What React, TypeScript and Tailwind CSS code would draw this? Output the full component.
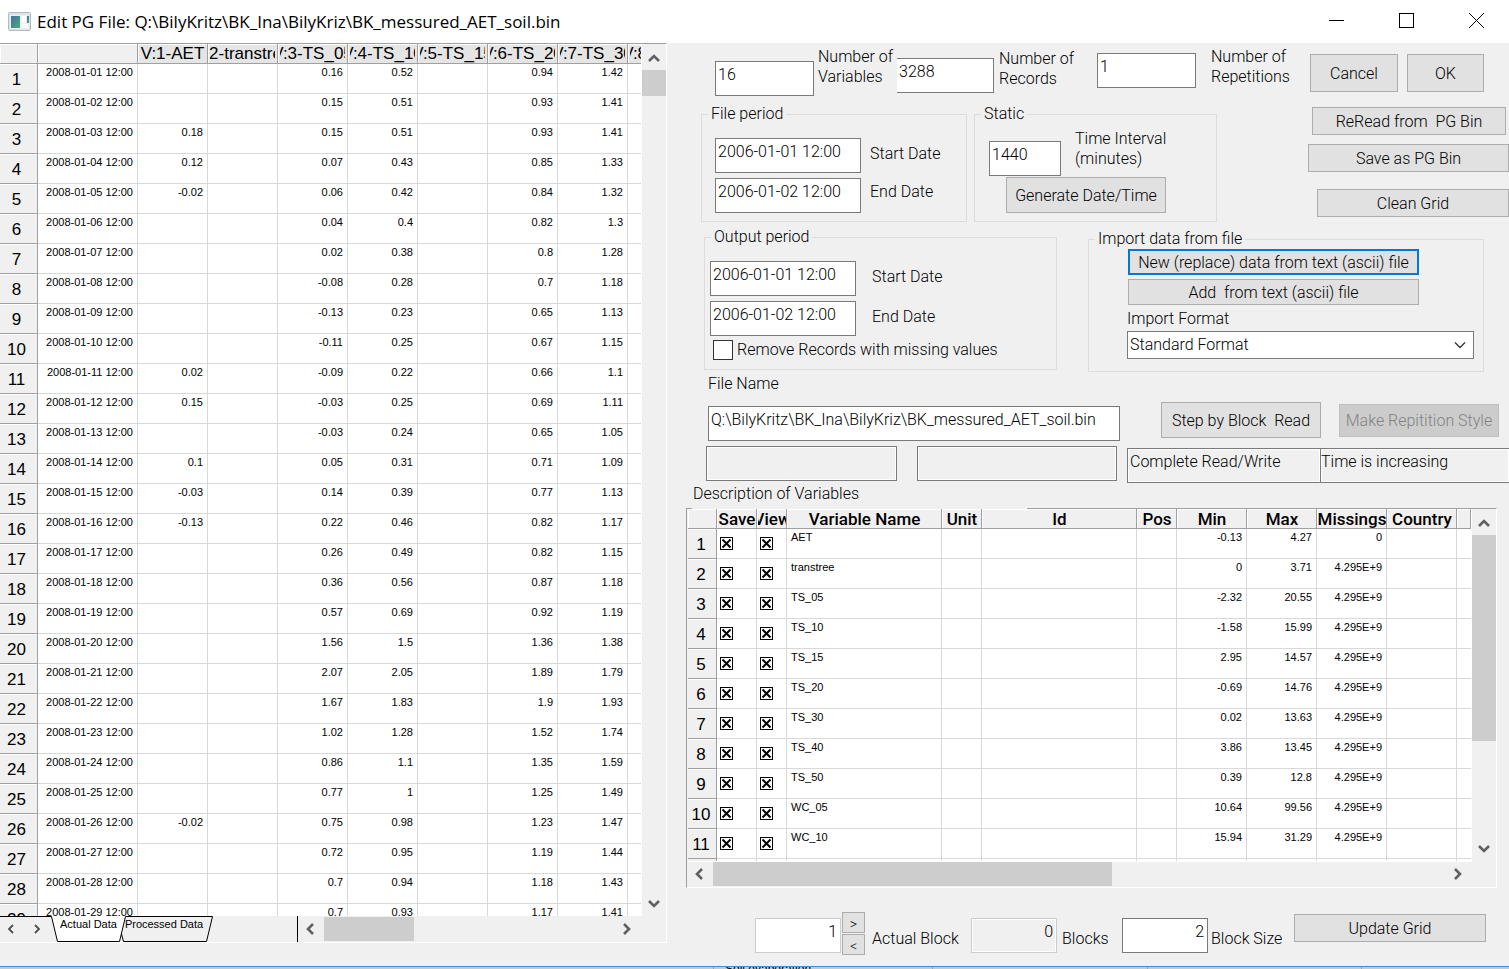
import React from "react";

type Cell = string;

const readings: Cell[][] = [
  ["", "", "0.16", "0.52", "", "0.94", "1.42"],
  ["", "", "0.15", "0.51", "", "0.93", "1.41"],
  ["0.18", "", "0.15", "0.51", "", "0.93", "1.41"],
  ["0.12", "", "0.07", "0.43", "", "0.85", "1.33"],
  ["-0.02", "", "0.06", "0.42", "", "0.84", "1.32"],
  ["", "", "0.04", "0.4", "", "0.82", "1.3"],
  ["", "", "0.02", "0.38", "", "0.8", "1.28"],
  ["", "", "-0.08", "0.28", "", "0.7", "1.18"],
  ["", "", "-0.13", "0.23", "", "0.65", "1.13"],
  ["", "", "-0.11", "0.25", "", "0.67", "1.15"],
  ["0.02", "", "-0.09", "0.22", "", "0.66", "1.1"],
  ["0.15", "", "-0.03", "0.25", "", "0.69", "1.11"],
  ["", "", "-0.03", "0.24", "", "0.65", "1.05"],
  ["0.1", "", "0.05", "0.31", "", "0.71", "1.09"],
  ["-0.03", "", "0.14", "0.39", "", "0.77", "1.13"],
  ["-0.13", "", "0.22", "0.46", "", "0.82", "1.17"],
  ["", "", "0.26", "0.49", "", "0.82", "1.15"],
  ["", "", "0.36", "0.56", "", "0.87", "1.18"],
  ["", "", "0.57", "0.69", "", "0.92", "1.19"],
  ["", "", "1.56", "1.5", "", "1.36", "1.38"],
  ["", "", "2.07", "2.05", "", "1.89", "1.79"],
  ["", "", "1.67", "1.83", "", "1.9", "1.93"],
  ["", "", "1.02", "1.28", "", "1.52", "1.74"],
  ["", "", "0.86", "1.1", "", "1.35", "1.59"],
  ["", "", "0.77", "1", "", "1.25", "1.49"],
  ["-0.02", "", "0.75", "0.98", "", "1.23", "1.47"],
  ["", "", "0.72", "0.95", "", "1.19", "1.44"],
  ["", "", "0.7", "0.94", "", "1.18", "1.43"],
  ["", "", "0.7", "0.93", "", "1.17", "1.41"],
];

const seriesHeads = [
  "V:1-AET",
  "V:2-transtree",
  "V:3-TS_05",
  "V:4-TS_10",
  "V:5-TS_15",
  "V:6-TS_20",
  "V:7-TS_30",
  "V:8-TS_40",
];

const variables = [
  { name: "AET", min: "-0.13", max: "4.27", missing: "0" },
  { name: "transtree", min: "0", max: "3.71", missing: "4.295E+9" },
  { name: "TS_05", min: "-2.32", max: "20.55", missing: "4.295E+9" },
  { name: "TS_10", min: "-1.58", max: "15.99", missing: "4.295E+9" },
  { name: "TS_15", min: "2.95", max: "14.57", missing: "4.295E+9" },
  { name: "TS_20", min: "-0.69", max: "14.76", missing: "4.295E+9" },
  { name: "TS_30", min: "0.02", max: "13.63", missing: "4.295E+9" },
  { name: "TS_40", min: "3.86", max: "13.45", missing: "4.295E+9" },
  { name: "TS_50", min: "0.39", max: "12.8", missing: "4.295E+9" },
  { name: "WC_05", min: "10.64", max: "99.56", missing: "4.295E+9" },
  { name: "WC_10", min: "15.94", max: "31.29", missing: "4.295E+9" },
];

const variableHeads = ["Save", "View", "Variable Name", "Unit", "Id", "Pos", "Min", "Max", "Missings", "Country", ""];

const btn = "border border-[#adadad] bg-[#e1e1e1] pt-[2px] text-center whitespace-pre";
const box = "h-[35px] rounded-none border border-[#7a7a7a] bg-white pt-[2px] pb-[11px] pl-[2px] leading-5 outline-none";
const group = "border border-[#dcdcdc]";
const legend = "ml-[6px] px-[3px] leading-5";
const headCell = "h-5 border-r border-b border-[#a0a0a0] p-0 font-normal shadow-[inset_1px_1px_0_#fff]";
const bodyCell = "h-[30px] border-r border-b border-[#d9d9d9] px-1 py-0 align-top";

const arrows = {
  up: "M1 9 L6 4 L11 9",
  down: "M1 3 L6 8 L11 3",
  left: "M9 1 L4 6 L9 11",
  right: "M3 1 L8 6 L3 11",
};

function Arrow({ dir, label }: { dir: keyof typeof arrows; label: string }) {
  return (
    <button type="button" aria-label={label} className="flex size-6 shrink-0 items-center justify-center">
      <svg width="12" height="12" viewBox="0 0 12 12" fill="none" stroke="#606060" strokeWidth="2.6">
        <path d={arrows[dir]} />
      </svg>
    </button>
  );
}

function HeadText({ children }: { children: string }) {
  return (
    <div className="mx-[2px] flex h-[19px] justify-center overflow-hidden leading-5 whitespace-nowrap">
      <span>{children}</span>
    </div>
  );
}

function Mark({ label }: { label: string }) {
  return (
    <span className="relative mt-2 block size-[13px]">
      <input
        type="checkbox"
        defaultChecked
        aria-label={label}
        className="peer block size-[13px] appearance-none border border-black bg-white"
      />
      <svg
        className="pointer-events-none absolute inset-0 hidden peer-checked:block"
        width="13"
        height="13"
        viewBox="0 0 13 13"
        stroke="#000"
        strokeWidth="2"
      >
        <path d="M2.500 2.500 L10.500 10.500 M10.500 2.500 L2.500 10.500" />
      </svg>
    </span>
  );
}

function TitleBar() {
  return (
    <header className="flex h-[43px] shrink-0 items-center bg-white pl-2">
      <svg width="23" height="20" viewBox="0 0 23 20">
        <defs>
          <linearGradient id="pane" x1="0" y1="0" x2="1" y2="1">
            <stop offset="0" stopColor="#3f74a8" />
            <stop offset="1" stopColor="#4fa876" />
          </linearGradient>
        </defs>
        <rect x="0.5" y="0.5" width="22" height="18" rx="1" fill="#dfe3e8" stroke="#b4b9c2" />
        <rect x="2" y="3" width="19" height="14" fill="#eceff2" />
        <rect x="3" y="4" width="9" height="12" fill="url(#pane)" />
        <rect x="14" y="4" width="4" height="7" fill="#fff" />
        <rect x="14" y="12" width="6" height="4" fill="#fafafa" />
        <rect x="19" y="4" width="2" height="7" fill="url(#pane)" />
      </svg>
      <h1 className="ml-[6px] font-['Open_Sans','Noto_Sans',sans-serif] text-[17px] font-normal whitespace-nowrap">
        Edit PG File: Q:\BilyKritz\BK_Ina\BilyKriz\BK_messured_AET_soil.bin
      </h1>
      <div className="ml-auto flex h-full items-center pb-[2px] -mr-[2px]">
        <button type="button" aria-label="Minimize" className="flex h-full w-[70px] items-center justify-center">
          <svg width="15" height="15" viewBox="0 0 15 15" stroke="#000" fill="none">
            <path d="M0 7.5 H15" />
          </svg>
        </button>
        <button type="button" aria-label="Maximize" className="flex h-full w-[70px] items-center justify-center">
          <svg width="15" height="15" viewBox="0 0 15 15" stroke="#000" fill="none">
            <rect x="0.5" y="0.5" width="14" height="14" />
          </svg>
        </button>
        <button type="button" aria-label="Close" className="flex h-full w-[70px] items-center justify-center">
          <svg width="15" height="15" viewBox="0 0 15 15" stroke="#000" fill="none">
            <path d="M0 0 L15 15 M15 0 L0 15" />
          </svg>
        </button>
      </div>
    </header>
  );
}

function DataGrid() {
  return (
    <section aria-label="Data" className="mb-[23px] flex w-[667px] shrink-0 flex-col border-r border-b border-white border-t border-t-[#a0a0a0]">
      <div className="flex min-h-0 flex-1">
        <div className="min-w-0 flex-1 overflow-hidden border-r border-white bg-white">
          <table className="w-[698px] table-fixed border-separate border-spacing-0 font-['Liberation_Sans',Arial,sans-serif]">
            <colgroup>
              <col className="w-[38px]" />
              <col className="w-[100px]" />
              {seriesHeads.map((h) => (
                <col key={h} className="w-[70px]" />
              ))}
            </colgroup>
            <thead className="text-[17px]">
              <tr>
                <th className={`${headCell} bg-[#f0f0f0]`} />
                <th className={`${headCell} bg-[#f0f0f0]`} />
                {seriesHeads.map((h) => (
                  <th key={h} className={`${headCell} bg-[#e5e5e5]`}>
                    <HeadText>{h}</HeadText>
                  </th>
                ))}
              </tr>
            </thead>
            <tbody className="text-[11px] leading-4">
              {readings.map((row, i) => (
                <tr key={i}>
                  <th className="h-[30px] border-r border-b border-[#a0a0a0] bg-[#f0f0f0] p-0 pt-[2px] pr-1 text-[17px] font-normal shadow-[inset_0_1px_0_#fff]">
                    {i + 1}
                  </th>
                  <td className={`${bodyCell} text-right whitespace-nowrap`}>
                    2008-01-{String(i + 1).padStart(2, "0")} 12:00
                  </td>
                  {row.map((v, j) => (
                    <td key={j} className={`${bodyCell} text-right`}>
                      {v}
                    </td>
                  ))}
                  <td className={bodyCell} />
                </tr>
              ))}
            </tbody>
          </table>
        </div>
        <div className="flex w-6 flex-col pt-[2px]">
          <Arrow dir="up" label="Scroll up" />
          <div className="flex-1">
            <div className="h-[26px] bg-[#cdcdcd]" />
          </div>
          <Arrow dir="down" label="Scroll down" />
        </div>
      </div>
      <div className="flex h-[26px] items-center">
        <div className="relative flex h-full w-[298px] border-r border-black font-['Liberation_Sans',Arial,sans-serif] text-[11px] font-normal">
          <svg className="pointer-events-none absolute top-0 left-0" width="214" height="26" viewBox="0 0 214 26" stroke="#000" fill="none">
            <path d="M51.500 0 L57.500 25.500 H119.500 L125.500 0 Z" fill="#fff" stroke="none" />
            <path d="M0 0.500 H51.500 L57.500 25.500 H119.500 L125.500 0.500 H212.500 L206.500 25.500 H123.500 L121.500 18" />
          </svg>
          <div className="relative flex items-center">
            <button type="button" aria-label="Previous sheet" className="flex w-[22px] justify-center">
              <svg width="8" height="10" viewBox="0 0 8 10" fill="none" stroke="#505050" strokeWidth="1.800">
                <path d="M6 1 L2 5 L6 9" />
              </svg>
            </button>
            <button type="button" aria-label="Next sheet" className="ml-1 flex w-[22px] justify-center">
              <svg width="8" height="10" viewBox="0 0 8 10" fill="none" stroke="#505050" strokeWidth="1.800">
                <path d="M2 1 L6 5 L2 9" />
              </svg>
            </button>
          </div>
          <button type="button" className="relative ml-3 h-4 leading-4 whitespace-nowrap">Actual Data</button>
          <button type="button" className="relative ml-2 h-4 leading-4 whitespace-nowrap">Processed Data</button>
        </div>
        <Arrow dir="left" label="Scroll left" />
        <div className="flex-1 pl-[2px]">
          <div className="h-6 w-[90px] bg-[#cdcdcd]" />
        </div>
        <div className="mr-[27px]">
          <Arrow dir="right" label="Scroll right" />
        </div>
      </div>
    </section>
  );
}

function Counters() {
  return (
    <div className="flex h-[61px] items-start">
      <input id="nvar" defaultValue="16" className={`${box} mt-[18px] ml-12 w-[99px]`} />
      <label htmlFor="nvar" className="mt-1 ml-1 w-[79px] leading-5">
        Number of Variables
      </label>
      <input id="nrec" defaultValue="3288" className={`${box} mt-[15px] w-[97px] border-l-0`} />
      <label htmlFor="nrec" className="mt-[6px] ml-[5px] w-[79px] leading-5">
        Number of Records
      </label>
      <input id="nrep" defaultValue="1" className={`${box} mt-[10px] ml-[19px] w-[99px]`} />
      <label htmlFor="nrep" className="mt-1 ml-[15px] w-[84px] leading-5">
        Number of Repetitions
      </label>
    </div>
  );
}

function Periods() {
  return (
    <div className="flex items-start pl-[34px]">
      <fieldset className={`${group} h-[118px] w-[266px]`}>
        <legend className={legend}>File period</legend>
        <div className="flex items-center gap-[9px] pt-[14px] pl-[13px]">
          <input id="fstart" defaultValue="2006-01-01 12:00" className={`${box} w-[146px]`} />
          <label htmlFor="fstart" className="pb-1 leading-5">Start Date</label>
        </div>
        <div className="flex items-center gap-[9px] pt-[5px] pl-[13px]">
          <input id="fend" defaultValue="2006-01-02 12:00" className={`${box} w-[146px]`} />
          <label htmlFor="fend" className="pb-2 leading-5">End Date</label>
        </div>
      </fieldset>
      <fieldset className={`${group} ml-[7px] h-[118px] w-[243px]`}>
        <legend className={legend}>Static</legend>
        <div className="flex items-start gap-[14px] pt-[5px] pl-[14px]">
          <input id="interval" defaultValue="1440" className={`${box} mt-3 w-[72px]`} />
          <label htmlFor="interval" className="w-[110px] leading-5">
            Time Interval (minutes)
          </label>
        </div>
        <button type="button" className={`${btn} mt-px ml-[31px] h-9 w-[160px]`}>Generate Date/Time</button>
      </fieldset>
    </div>
  );
}

function OutputAndImport() {
  return (
    <div className="flex items-start pl-[37px]">
      <fieldset className={`${group} mt-[5px] h-[143px] w-[353px]`}>
        <legend className={legend}>Output period</legend>
        <div className="flex items-center gap-4 pt-[14px] pl-[5px]">
          <input id="ostart" defaultValue="2006-01-01 12:00" className={`${box} w-[146px]`} />
          <label htmlFor="ostart" className="pb-1 leading-5">Start Date</label>
        </div>
        <div className="flex items-center gap-4 pt-[5px] pl-[5px]">
          <input id="oend" defaultValue="2006-01-02 12:00" className={`${box} w-[146px]`} />
          <label htmlFor="oend" className="pb-1 leading-5">End Date</label>
        </div>
        <div className="flex items-center gap-1 pt-1 pl-2">
          <input id="missing" type="checkbox" className="size-5 appearance-none border border-[#333333] bg-white" />
          <label htmlFor="missing" className="leading-5">Remove Records with missing values</label>
        </div>
      </fieldset>
      <fieldset className={`${group} mt-[7px] ml-[31px] h-[143px] w-[396px]`}>
        <legend className={legend}>Import data from file</legend>
        <div className="flex w-[385px] flex-col items-start pl-[38px]">
          <button type="button" className="ml-px h-[26px] w-[291px] border-2 border-[#0078d7] bg-[#e1e1e1] pt-px leading-5">
            New (replace) data from text (ascii) file
          </button>
          <button type="button" className={`${btn} mt-1 ml-px h-[26px] w-[291px] leading-5`}>{"Add  from text (ascii) file"}</button>
          <label htmlFor="format" className="mt-1 leading-5">Import Format</label>
          <div className="relative mt-[2px] w-full">
            <select id="format" className="h-7 w-full appearance-none rounded-none border border-[#7a7a7a] bg-white pl-[2px] leading-5">
              <option>Standard Format</option>
            </select>
            <svg className="pointer-events-none absolute top-2 right-2" width="12" height="12" viewBox="0 0 12 12" fill="none" stroke="#333" strokeWidth="1.300">
              <path d="M1 3.500 L6 8.500 L11 3.500" />
            </svg>
          </div>
        </div>
      </fieldset>
    </div>
  );
}

function FileArea() {
  const flat = "h-[35px] rounded-none border-y border-[#7a7a7a] bg-[#f0f0f0] pt-[2px] pb-[11px] leading-5 shadow-[inset_0_0_0_1px_#fff] outline-none";
  return (
    <div className="flex flex-col">
      <label htmlFor="fname" className="mt-[2px] ml-[41px] leading-5">File Name</label>
      <div className="mt-2 flex items-start pl-[41px]">
        <input
          id="fname"
          defaultValue="Q:\BilyKritz\BK_Ina\BilyKriz\BK_messured_AET_soil.bin"
          className={`${box} mt-1 w-[412px]`}
        />
        <button type="button" className={`${btn} ml-[41px] h-9 w-[160px]`}>{"Step by Block  Read"}</button>
        <button type="button" disabled className="mt-[2px] ml-[18px] h-[33px] w-[160px] border border-[#bfbfbf] bg-[#cccccc] text-[#838383]">
          Make Repitition Style
        </button>
      </div>
      <div className="mt-[5px] flex items-start pl-[39px]">
        <input aria-label="First date" readOnly className={`${flat} w-[191px] border-x pl-[2px]`} />
        <input aria-label="Last date" readOnly className={`${flat} ml-5 w-[200px] border-x pl-[2px]`} />
        <input aria-label="Read mode" readOnly value="Complete Read/Write" className={`${flat} mt-[2px] ml-[10px] w-[194px] border-x pl-[2px]`} />
        <input aria-label="Time order" readOnly value="Time is increasing" className={`${flat} mt-[2px] min-w-0 flex-1 pl-0`} />
      </div>
    </div>
  );
}

function VariablesGrid() {
  return (
    <section aria-labelledby="vars" className="mr-3 ml-[19px] flex min-h-0 flex-1 flex-col">
      <h2 id="vars" className="relative z-10 -mb-px ml-[6px] h-[26px] w-[335px] bg-[#f0f0f0] pt-px pl-px leading-5">Description of Variables</h2>
      <div className="flex min-h-0 flex-1 flex-col border-r border-b border-white border-t border-l border-t-[#a0a0a0] border-l-[#a0a0a0]">
        <div className="flex min-h-0 flex-1 pl-px">
          <div className="min-w-0 flex-1 overflow-hidden border-r border-b border-white bg-white">
            <table className="w-full min-w-[782px] table-fixed border-separate border-spacing-0 font-['Liberation_Sans',Arial,sans-serif]">
              <colgroup>
                <col className="w-[29px]" />
                <col className="w-[40px]" />
                <col className="w-[30px]" />
                <col className="w-[155px]" />
                <col className="w-[40px]" />
                <col className="w-[155px]" />
                <col className="w-[40px]" />
                <col className="w-[70px]" />
                <col className="w-[70px]" />
                <col className="w-[70px]" />
                <col className="w-[70px]" />
                <col />
              </colgroup>
              <thead className="font-['Roboto',sans-serif] text-[17px]">
                <tr>
                  <th className={`${headCell} bg-[#f0f0f0]`} />
                  {variableHeads.map((h, i) => (
                    <th key={i} className={`${headCell} bg-[#f0f0f0]`}>
                      <div className="ml-px flex h-[19px] justify-center overflow-hidden leading-5 font-medium whitespace-nowrap">
                        <span>{h}</span>
                      </div>
                    </th>
                  ))}
                </tr>
              </thead>
              <tbody className="text-[11px] leading-4">
                {variables.map((v, i) => (
                  <tr key={v.name}>
                    <th className="h-[30px] border-r border-b border-[#a0a0a0] bg-[#f0f0f0] p-0 pt-[2px] pr-[2px] text-[17px] font-normal shadow-[inset_0_1px_0_#fff]">
                      {i + 1}
                    </th>
                    <td className={`${bodyCell} pl-[3px]`}><Mark label={`Save ${v.name}`} /></td>
                    <td className={`${bodyCell} pl-[3px]`}><Mark label={`View ${v.name}`} /></td>
                    <td className={bodyCell}>{v.name}</td>
                    <td className={bodyCell} />
                    <td className={bodyCell} />
                    <td className={bodyCell} />
                    <td className={`${bodyCell} text-right`}>{v.min}</td>
                    <td className={`${bodyCell} text-right`}>{v.max}</td>
                    <td className={`${bodyCell} text-right`}>{v.missing}</td>
                    <td className={bodyCell} />
                    <td className="border-b border-[#d9d9d9]" />
                  </tr>
                ))}
                <tr>
                  <th className="h-[30px] border-r border-[#a0a0a0] bg-[#f0f0f0]" />
                  {variableHeads.slice(1).map((h) => (
                    <td key={h} className={bodyCell} />
                  ))}
                  <td />
                </tr>
              </tbody>
            </table>
          </div>
          <div className="flex w-6 flex-col pt-[2px] pb-px">
            <Arrow dir="up" label="Scroll up" />
            <div className="flex-1">
              <div className="h-[206px] bg-[#cdcdcd]" />
            </div>
            <Arrow dir="down" label="Scroll down" />
          </div>
        </div>
        <div className="flex h-[25px] items-start">
          <Arrow dir="left" label="Scroll left" />
          <div className="flex-1 pl-[2px]">
            <div className="h-6 w-[399px] bg-[#cdcdcd]" />
          </div>
          <div className="mr-[26px]">
            <Arrow dir="right" label="Scroll right" />
          </div>
        </div>
      </div>
    </section>
  );
}

function BlockBar() {
  const num = "h-[35px] w-[86px] rounded-none border pt-[2px] pr-[3px] pb-[11px] text-right leading-5 outline-none";
  return (
    <footer className="mt-6 mb-[11px] flex items-start pl-[88px]">
      <input id="actual" defaultValue="1" className={`${num} mt-[6px] border-[#cccccc] bg-white`} />
      <div className="ml-px flex flex-col gap-px">
        <button type="button" className={`${btn} h-[21px] w-[23px] text-[14px] leading-4`}>&gt;</button>
        <button type="button" className={`${btn} h-[21px] w-[23px] text-[14px] leading-4`}>&lt;</button>
      </div>
      <label htmlFor="actual" className="mt-[17px] ml-[7px] w-[99px] leading-5">Actual Block</label>
      <input id="blocks" readOnly value="0" className={`${num} mt-[6px] border-[#cccccc] bg-[#f0f0f0] shadow-[inset_0_0_0_1px_#fff]`} />
      <label htmlFor="blocks" className="mt-[17px] ml-[5px] w-[60px] leading-5">Blocks</label>
      <input id="size" defaultValue="2" className={`${num} mt-[6px] border-[#7a7a7a] bg-white`} />
      <label htmlFor="size" className="mt-[17px] ml-[3px] leading-5 whitespace-nowrap">Block Size</label>
      <button type="button" className={`${btn} mt-[2px] mr-[23px] ml-auto h-7 w-[192px] leading-5`}>Update Grid</button>
    </footer>
  );
}

export default function App() {
  return (
    <div className="flex h-screen min-w-[1509px] flex-col overflow-hidden bg-[#f0f0f0] font-['Roboto',sans-serif] text-[16px] font-light text-black">
      <TitleBar />
      <main className="flex min-h-0 flex-1">
        <DataGrid />
        <div className="flex min-w-0 flex-1 flex-col">
          <div className="flex">
            <div className="shrink-0">
              <Counters />
              <Periods />
            </div>
            <div className="ml-auto flex w-[201px] shrink-0 flex-col pt-[11px]">
              <div className="flex gap-[9px] pl-[2px]">
                <button type="button" className={`${btn} h-[38px] w-[88px]`}>Cancel</button>
                <button type="button" className={`${btn} h-[38px] w-[77px]`}>OK</button>
              </div>
              <button type="button" className={`${btn} mt-[15px] mr-[3px] ml-1 h-7 leading-5`}>{"ReRead from  PG Bin"}</button>
              <button type="button" className={`${btn} mt-[9px] h-7 leading-5`}>Save as PG Bin</button>
              <button type="button" className={`${btn} mt-[17px] ml-[9px] h-7 leading-5`}>Clean Grid</button>
            </div>
          </div>
          <OutputAndImport />
          <FileArea />
          <VariablesGrid />
          <BlockBar />
        </div>
      </main>
      <div className="flex h-[3px] shrink-0 overflow-hidden border-t border-[#4a88dc] bg-[#c8c8c8] pl-[713px]">
        <div className="h-[2px] w-[219px] border-l border-[#a0a0a0]">
          <p className="-mt-[5px] pl-[11px] font-['Liberation_Sans',Arial,sans-serif] text-[12px] leading-[14px] font-normal">Soil evaporation</p>
        </div>
        <div className="h-[2px] w-[215px] border-l border-[#a0a0a0]" />
        <div className="h-[2px] w-[215px] border-x border-[#a0a0a0]" />
      </div>
    </div>
  );
}
